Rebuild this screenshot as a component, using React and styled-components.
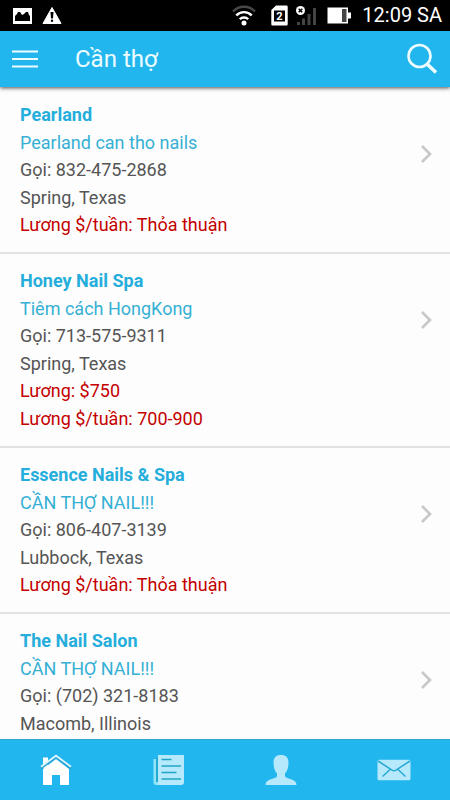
import React from "react";
import styled, { createGlobalStyle } from "styled-components";

const GlobalStyle = createGlobalStyle`
  *, *::before, *::after { box-sizing: border-box; }
  body {
    margin: 0;
    background: #fdfdfd;
    font-family: Roboto, "Noto Sans", sans-serif;
  }
`;

const Screen = styled.div`
  display: flex;
  flex-direction: column;
  height: 100vh;
  overflow: hidden;
`;

const StatusBar = styled.div`
  flex: none;
  display: flex;
  align-items: center;
  justify-content: space-between;
  height: 31px;
  padding: 0 8px 0 13px;
  background: #000;
  color: #fff;
`;

const StatusGroup = styled.div`
  display: flex;
  align-items: center;
  gap: ${(p) => p.$gap}px;
`;

const Clock = styled.time`
  font-size: 20px;
  line-height: 31px;
  white-space: nowrap;
`;

const Header = styled.header`
  flex: none;
  z-index: 1;
  display: flex;
  align-items: center;
  height: 56px;
  padding: 0 8px 0 8px;
  background: #22b6ee;
  color: #ecfcff;
  box-shadow: 0 1px 4px rgba(0, 0, 0, 0.7);
`;

const Title = styled.h1`
  flex: 1;
  margin: 0 0 0 33px;
  font-size: 24px;
  line-height: 54px;
  font-weight: 400;
`;

const IconButton = styled.button`
  display: flex;
  padding: 4px;
  border: 0;
  background: none;
  color: inherit;
  cursor: pointer;
`;

const List = styled.ul`
  flex: 1;
  min-height: 0;
  margin: 0;
  padding: 1px 0 0;
  overflow: hidden;
  list-style: none;
`;

const Item = styled.li`
  border-bottom: 2px solid #e2e2e2;
`;

const ItemLink = styled.a`
  display: flex;
  align-items: flex-start;
  justify-content: space-between;
  padding: 13px 16px 13px 20px;
  color: #555;
  text-decoration: none;
  font-size: 18px;
`;

const Name = styled.h2`
  margin: 0;
  color: #25addb;
  font-size: 18px;
  line-height: 28px;
  font-weight: 700;
`;

const Headline = styled.div`
  color: #35b0d4;
  line-height: 27px;
`;

const Phone = styled.div`
  line-height: 28px;
`;

const Place = styled.div`
  line-height: 27px;
`;

const Wage = styled.div`
  color: #c40000;
  line-height: 28px;
`;

const Chevron = styled.svg`
  flex: none;
  margin-top: 43px;
`;

const TabBar = styled.nav`
  flex: none;
  display: grid;
  grid-template-columns: repeat(4, 1fr);
  height: 61px;
  background: #22b6ee;
  border-top: 1px solid #2fa3cd;
`;

const Tab = styled.a`
  display: flex;
  align-items: center;
  justify-content: center;
  color: ${(p) => (p.$active ? "#fff" : "#b5e9fb")};
`;

const jobs = [
  {
    name: "Pearland",
    headline: "Pearland can tho nails",
    phone: "832-475-2868",
    place: "Spring, Texas",
    wages: ["Lương $/tuần: Thỏa thuận"],
  },
  {
    name: "Honey Nail Spa",
    headline: "Tiêm cách HongKong",
    phone: "713-575-9311",
    place: "Spring, Texas",
    wages: ["Lương: $750", "Lương $/tuần: 700-900"],
  },
  {
    name: "Essence Nails & Spa",
    headline: "CẦN THỢ NAIL!!!",
    phone: "806-407-3139",
    place: "Lubbock, Texas",
    wages: ["Lương $/tuần: Thỏa thuận"],
  },
  {
    name: "The Nail Salon",
    headline: "CẦN THỢ NAIL!!!",
    phone: "(702) 321-8183",
    place: "Macomb, Illinois",
    wages: [],
  },
];

const PictureIcon = () => (
  <svg width="19" height="16" viewBox="0 0 19 16" aria-hidden="true">
    <path fill="#fff" d="M0 0h19v16H0z" />
    <path d="M2 13V8l2-2 1-2h2l2 3 2-1 2-2h2l1 3 1 1v5z" fill="#000" />
  </svg>
);

const WarningIcon = () => (
  <svg width="20" height="17" viewBox="0 0 20 17" aria-hidden="true">
    <path d="M10 .5 19 16.500H1z" fill="#fff" stroke="#fff" strokeLinejoin="round" />
    <path d="M8.500 5h3L11 11.500H9z" fill="#000" />
    <circle cx="10" cy="13.700" r="1.200" fill="#000" />
  </svg>
);

const WifiIcon = () => (
  <svg width="24" height="21" viewBox="0 0 24 21" fill="none" strokeWidth="2.400" aria-hidden="true">
    <path d="M1 6.500a15 15 0 0 1 22 0" stroke="#484848" />
    <path d="M4.300 10.500a10.500 10.500 0 0 1 15.400 0" stroke="#fff" />
    <path d="M7.800 14.300a5.700 5.700 0 0 1 8.400 0" stroke="#fff" />
    <circle cx="12" cy="18" r="2.500" fill="#fff" />
  </svg>
);

const SimIcon = () => (
  <svg width="17" height="21" viewBox="0 0 17 21" aria-hidden="true">
    <path d="M5 .5h10.500a1.200 1.200 0 0 1 1.200 1.200v17.600a1.200 1.200 0 0 1-1.200 1.200h-14A1.200 1.200 0 0 1 .3 19.300V5z" fill="#fff" />
    <path d="M3 5.500h11v11H3z" fill="#000" />
    <text x="8.500" y="15" textAnchor="middle" fontSize="11" fontWeight="700" fill="#fff">2</text>
  </svg>
);

const SignalIcon = () => (
  <svg width="22" height="21" viewBox="0 0 22 21" aria-hidden="true">
    <path d="M2 17h3v3H2zM7 13.500h3V20H7zM12.500 9h3v11h-3zM18 3h3v17h-3z" fill="#444" />
    <circle cx="5.500" cy="5.500" r="4.500" fill="#fff" />
    <path d="m3.700 3.700 3.600 3.600m0-3.600L3.700 7.300" stroke="#000" strokeWidth="1.500" />
  </svg>
);

const BatteryIcon = () => (
  <svg width="25" height="17" viewBox="0 0 25 17" aria-hidden="true">
    <path d="M.5.5H21v5h3v6h-3v5H.5z" fill="#fff" />
    <path d="M15 2h4.500v13H15z" fill="#444" />
  </svg>
);

const MenuIcon = () => (
  <svg width="26" height="20" viewBox="0 0 26 20" stroke="currentColor" strokeWidth="2.200" aria-hidden="true">
    <path d="M0 2.500h26M0 10h26M0 17.500h26" />
  </svg>
);

const SearchIcon = () => (
  <svg width="32" height="32" viewBox="0 0 32 32" fill="none" stroke="currentColor" aria-hidden="true">
    <circle cx="13.500" cy="13" r="11" strokeWidth="2.600" />
    <path d="m21 21 9 8.500" strokeWidth="3.600" />
  </svg>
);

const HomeIcon = () => (
  <svg width="32" height="32" viewBox="0 0 32 32" aria-hidden="true">
    <path d="M3 14V3.500h5V14z" fill="currentColor" />
    <path d="M3 15 16 5l13 10v16h-9V21h-8v10H3z" fill="currentColor" />
    <path d="M1 14 16 3l15 11" fill="none" stroke="#2aa3d0" strokeWidth="2.600" />
    <path d="M1 12.700 16 1.700l15 11" fill="none" stroke="#d9f6ff" strokeWidth="1.800" />
  </svg>
);

const NewsIcon = () => (
  <svg width="32" height="32" viewBox="0 0 32 32" aria-hidden="true">
    <path d="M5 1h26v27a3 3 0 0 1-3 3H5z" fill="currentColor" />
    <path d="M.5 5H3v23h2v3H3a2.500 2.500 0 0 1-2.500-2.500z" fill="#8fe4f8" />
    <path d="M4 4v24M8.500 5.500h10M8.500 12h19.500M8.500 18.500h15M8.500 25h19.500" fill="none" stroke="#20a5c8" strokeWidth="1.300" />
  </svg>
);

const PersonIcon = () => (
  <svg width="32" height="32" viewBox="0 0 32 32" aria-hidden="true">
    <path d="M16 1c5 0 7.500 2.500 7.500 7.500 0 5-1 8-3.500 11v2c0 1.500 1 2 3 2.700 4 1.300 8.500 2.300 8.500 6.800h-31c0-4.500 4.500-5.500 8.500-6.800 2-.7 3-1.200 3-2.700v-2c-2.500-3-3.500-6-3.500-11C8.500 3.500 11 1 16 1z" fill="currentColor" />
  </svg>
);

const MailIcon = () => (
  <svg width="34" height="22" viewBox="0 0 34 22" aria-hidden="true">
    <rect x=".5" y=".7" width="33" height="20.600" rx="1.500" fill="currentColor" />
    <path d="m1 2 14 9q2 1.500 4 0l14-9M13 10.500 5.500 17.500M21 10.500l7.500 7" fill="none" stroke="#28a9d5" strokeWidth="1.500" />
  </svg>
);

const tabs = [
  { label: "Trang chủ", href: "#home", Icon: HomeIcon, active: true },
  { label: "Tin tức", href: "#news", Icon: NewsIcon },
  { label: "Tài khoản", href: "#account", Icon: PersonIcon },
  { label: "Thư", href: "#mail", Icon: MailIcon },
];

function JobItem({ job }) {
  return (
    <Item>
      <ItemLink href="#job">
        <div>
          <Name>{job.name}</Name>
          <Headline>{job.headline}</Headline>
          <Phone>Gọi: {job.phone}</Phone>
          <Place>{job.place}</Place>
          {job.wages.map((wage) => (
            <Wage key={wage}>{wage}</Wage>
          ))}
        </div>
        <Chevron width="16" height="20" viewBox="0 0 16 20" fill="none" stroke="#c8c8c8" strokeWidth="2.600" aria-hidden="true">
          <path d="m4 2 8 8-8 8" />
        </Chevron>
      </ItemLink>
    </Item>
  );
}

export default function App() {
  return (
    <Screen>
      <GlobalStyle />
      <StatusBar>
        <StatusGroup $gap={10}>
          <PictureIcon />
          <WarningIcon />
        </StatusGroup>
        <StatusGroup $gap={10}>
          <StatusGroup $gap={15}>
            <WifiIcon />
            <StatusGroup $gap={7}>
              <SimIcon />
              <SignalIcon />
            </StatusGroup>
          </StatusGroup>
          <BatteryIcon />
          <Clock>12:09 SA</Clock>
        </StatusGroup>
      </StatusBar>
      <Header>
        <IconButton type="button" aria-label="Menu">
          <MenuIcon />
        </IconButton>
        <Title>Cần thợ</Title>
        <IconButton type="button" aria-label="Tìm kiếm">
          <SearchIcon />
        </IconButton>
      </Header>
      <List>
        {jobs.map((job) => (
          <JobItem key={job.name} job={job} />
        ))}
      </List>
      <TabBar>
        {tabs.map(({ label, href, Icon, active }) => (
          <Tab key={label} href={href} aria-label={label} $active={active}>
            <Icon />
          </Tab>
        ))}
      </TabBar>
    </Screen>
  );
}
